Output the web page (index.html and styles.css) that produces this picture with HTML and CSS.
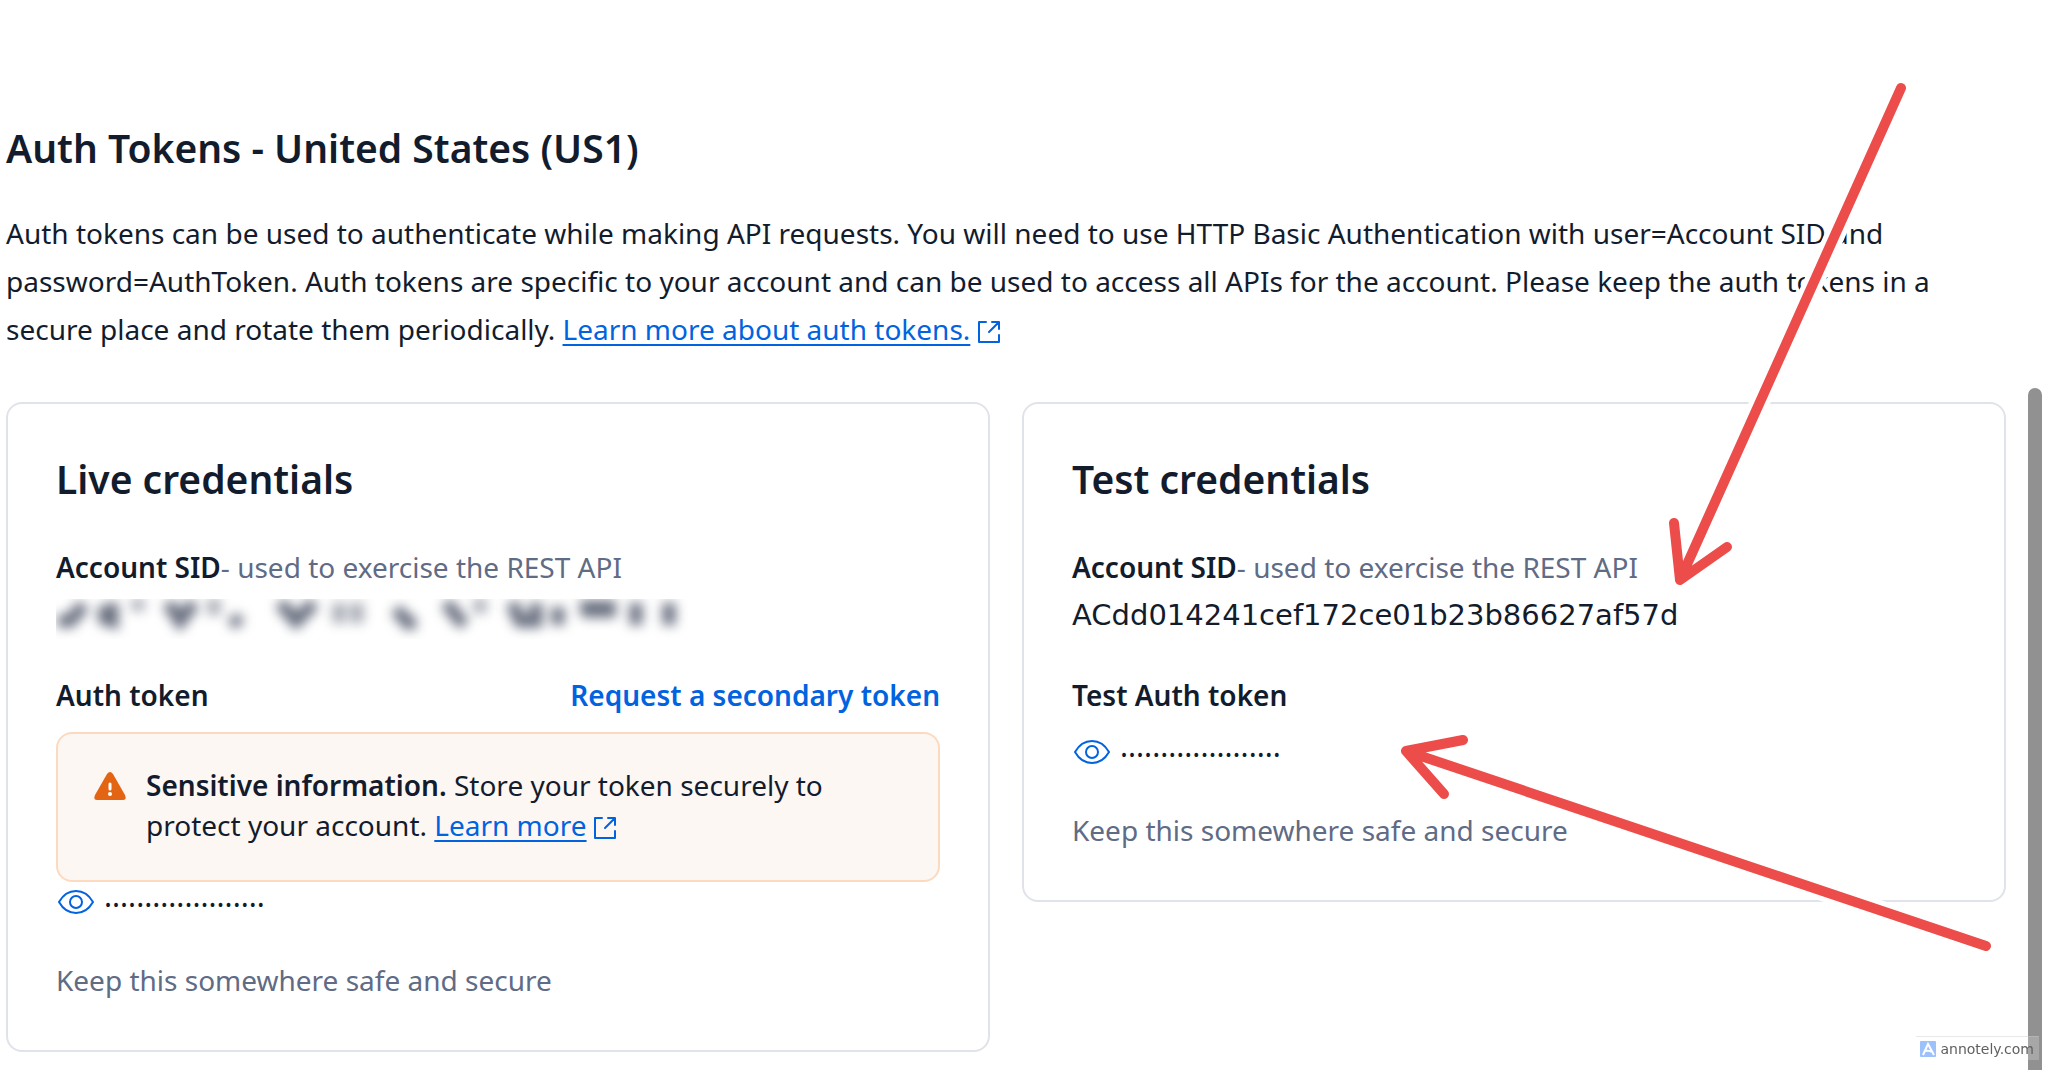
FILE: index.html
```html
<!DOCTYPE html>
<html lang="en">
<head>
<meta charset="utf-8">
<title>Auth Tokens - United States (US1)</title>
<link rel="stylesheet" href="styles.css">
</head>
<body>
<svg class="sprite" aria-hidden="true">
  <symbol id="external" viewBox="0 0 22 22"><path d="M8 1H1v20h20v-7M14 1h7v7M20 2L11 11" fill="none" stroke="currentColor" stroke-width="2" stroke-linejoin="round" stroke-linecap="round"/></symbol>
  <symbol id="eye" viewBox="0 0 36 24"><path d="M1 12C5 5 11 1 18 1s13 4 17 11c-4 7-10 11-17 11S5 19 1 12z" fill="none" stroke="currentColor" stroke-width="2" stroke-linejoin="round"/><circle cx="18" cy="12" r="6" fill="none" stroke="currentColor" stroke-width="2"/></symbol>
</svg>
<main class="page">
  <h1 class="title">Auth Tokens - United States (US1)</h1>
  <p class="intro">Auth tokens can be used to authenticate while making API requests. You will need to use HTTP Basic Authentication with user=Account SID and password=AuthToken. Auth tokens are specific to your account and can be used to access all APIs for the account. Please keep the auth tokens in a secure place and rotate them periodically. <a class="link" href="#tokens">Learn more about auth tokens.</a> <svg class="external"><use href="#external"/></svg></p>
  <div class="cards">
    <section class="card">
      <h2 class="card-title">Live credentials</h2>
      <p class="row"><strong>Account SID</strong><span class="muted">- used to exercise the REST API</span></p>
      <div class="redacted"><svg class="smudge" viewBox="0 0 640 40" aria-label="Hidden account SID"><path d="M2 22l12 0 14-16M44 18l12 4V4M42 14h14"/><path class="faint" d="M82 0v12M158 0v16M283 4v20M301 4v20M424 0v14"/><path d="M112 4l12 18 14-18M176 18l8 8M224 4l16 18 18-18M340 10l12 14 8 0M390 4l18 22M456 4l8 18 16 0V4M502 8v18M524 8h36M526 12h34M580 4v22M613 4v22"/></svg></div>
      <div class="row token-head"><strong>Auth token</strong><button class="action" type="button">Request a secondary token</button></div>
      <div class="callout">
        <svg class="warning" viewBox="0 0 32 28"><path d="M13 2Q16-2 19 2L31 23Q33 28 29 28H3Q-1 28 1 23Z" fill="#e36514"/><path d="M16 12v5" stroke="#fff" stroke-width="3" stroke-linecap="round"/><circle cx="16" cy="22" r="2" fill="#fff"/></svg>
        <p class="callout-text"><strong>Sensitive information.</strong> Store your token securely to protect your account. <a class="link" href="#learn">Learn more</a> <svg class="external"><use href="#external"/></svg></p>
      </div>
      <div class="secret"><button class="reveal" type="button" aria-label="Show auth token"><svg class="eye"><use href="#eye"/></svg></button><span class="dots">····················</span></div>
      <p class="row muted note">Keep this somewhere safe and secure</p>
    </section>
    <section class="card">
      <h2 class="card-title">Test credentials</h2>
      <p class="row"><strong>Account SID</strong><span class="muted">- used to exercise the REST API</span></p>
      <p class="row sid">ACdd014241cef172ce01b23b86627af57d</p>
      <div class="row token-head"><strong>Test Auth token</strong></div>
      <div class="secret test"><button class="reveal" type="button" aria-label="Show test auth token"><svg class="eye"><use href="#eye"/></svg></button><span class="dots">····················</span></div>
      <p class="row muted note">Keep this somewhere safe and secure</p>
    </section>
  </div>
</main>
<div class="scrollbar"></div>
<svg class="arrows" viewBox="0 0 2046 1070" aria-hidden="true">
  <path class="halo" d="M1901 88L1680 580M1674 523L1680 580L1727 547M1986 946L1406 751M1463 740L1406 751L1444 794"/>
  <path class="ink" d="M1901 88L1680 580M1674 523L1680 580L1727 547M1986 946L1406 751M1463 740L1406 751L1444 794"/>
</svg>
<div class="badge"><svg class="badge-logo" viewBox="0 0 16 16"><rect width="16" height="16" rx="1" fill="#9cc1fb"/><path d="M3 14L8 3l6 11M5 10q4-1 7 1" fill="none" stroke="#fff" stroke-width="2"/></svg><span>annotely.com</span></div>
</body>
</html>
```
FILE: styles.css
```css
* { box-sizing: border-box; }
body { margin: 0; background: #fff; color: #121c2d; font: 28px/48px "Noto Sans", sans-serif; overflow: hidden; }
h1, h2, p { margin: 0; }
strong { font-weight: 600; }
button { border: 0; padding: 0; background: none; font: inherit; cursor: pointer; }
.sprite { display: none; }
.page { padding: 120px 40px 0 6px; }
.title { font-size: 39px; line-height: 56px; font-weight: 600; }
.intro { margin-top: 33px; }
.link { color: #0263e0; text-decoration: underline; text-decoration-thickness: 2px; text-underline-offset: 4px; }
.external { width: 22px; height: 22px; color: #0263e0; vertical-align: -3px; }
.cards { display: grid; grid-template-columns: 1fr 1fr; gap: 32px; align-items: start; margin-top: 49px; }
.card { border: 2px solid #e1e3ea; border-radius: 16px; padding: 47px 48px 46px; }
.card-title { font-size: 39px; line-height: 56px; font-weight: 600; }
.card-title + .row { margin-top: 36px; }
.muted { color: #606b85; }
.sid { font-family: "DejaVu Sans", sans-serif; font-size: 29px; }
.redacted { height: 48px; padding-top: 8px; }
.smudge { display: block; width: 640px; height: 40px; overflow: hidden; }
.smudge path { fill: none; stroke: #6a7080; stroke-width: 13px; filter: blur(6px); }
.smudge .faint { opacity: 0.6; }
.token-head { display: flex; justify-content: space-between; margin-top: 32px; }
.action { color: #0263e0; font-weight: 600; }
.callout { display: flex; gap: 20px; margin-top: 13px; padding: 31px 36px 35px; border: 2px solid #fcdabf; border-radius: 16px; background: #fdf7f4; }
.callout-text { line-height: 40px; }
.warning { flex: none; width: 32px; height: 28px; margin-top: 7px; }
.secret { display: flex; align-items: center; gap: 10px; height: 40px; padding-left: 2px; }
.test { margin-top: 13px; }
.reveal { display: flex; color: #0263e0; }
.eye { width: 36px; height: 24px; }
.dots { padding-top: 6px; font-size: 30px; }
.note { margin-top: 34px; }
.scrollbar { position: fixed; top: 388px; right: 4px; bottom: 0; width: 14px; border-radius: 7px 7px 0 0; background: #919191; }
.arrows { position: absolute; top: 0; left: 0; width: 100%; pointer-events: none; }
.arrows path { fill: none; stroke-linecap: round; stroke-linejoin: round; }
.arrows .halo { stroke: #fff; stroke-width: 20px; }
.arrows .ink { stroke: #ec4d4a; stroke-width: 10px; }
.badge { position: fixed; right: 7px; bottom: 10px; display: flex; align-items: center; gap: 4px; height: 24px; padding: 0 5px 0 4px; border-top: 1px solid rgb(200 200 200 / 40%); background: rgb(255 255 255 / 20%); font: 14px/24px "DejaVu Sans", sans-serif; color: #606060; }
.badge-logo { width: 16px; height: 16px; }
```
